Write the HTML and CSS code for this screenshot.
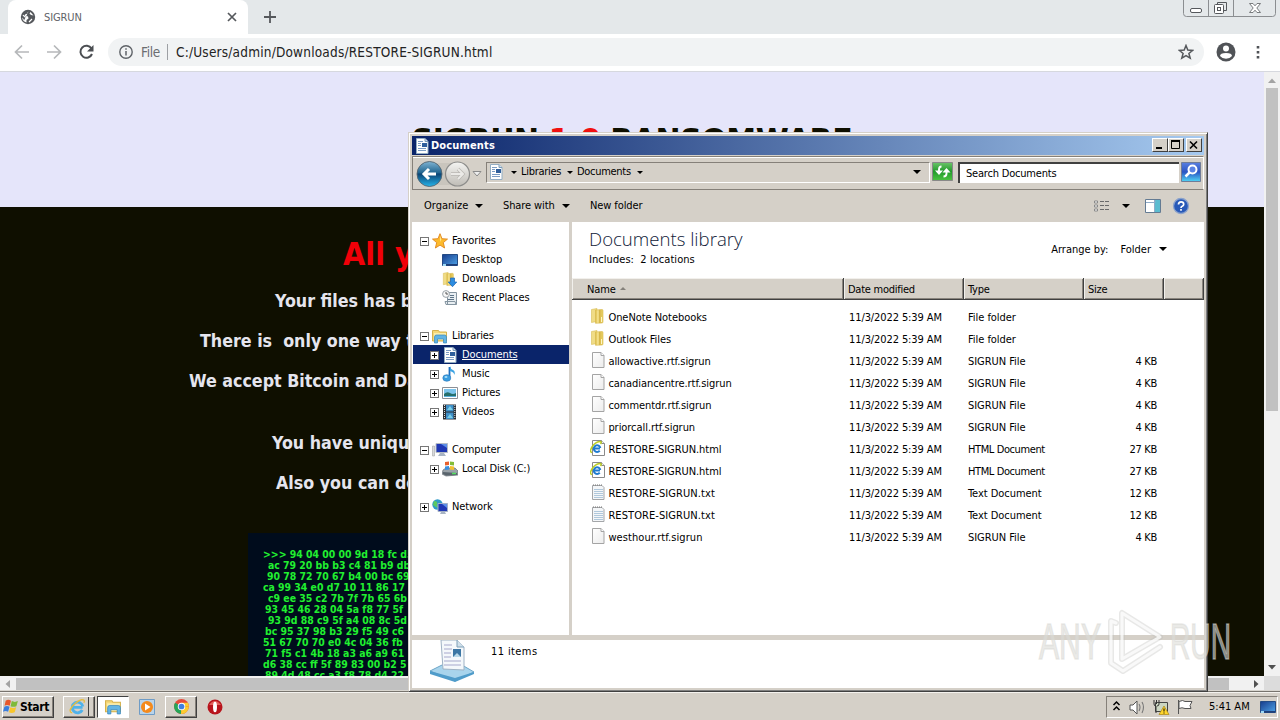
FILE: index.html
```html
<!DOCTYPE html>
<html lang="en">
<head>
<meta charset="utf-8">
<title>SIGRUN</title>
<link rel="stylesheet" href="styles.css">
</head>
<body>
<svg class="defs" width="0" height="0">
  <defs>
    <linearGradient id="gFold" x1="0" x2="1"><stop offset="0" stop-color="#d9b740"/><stop offset=".35" stop-color="#fbeb9c"/><stop offset=".5" stop-color="#d6b548"/><stop offset="1" stop-color="#ecd468"/></linearGradient>
    <linearGradient id="gBlue" x1="0" y1="0" x2="1" y2="1"><stop offset="0" stop-color="#173c8c"/><stop offset="1" stop-color="#4fa4e8"/></linearGradient>
    <linearGradient id="gPage" x1="0" y1="0" x2="1" y2="1"><stop offset="0" stop-color="#fff"/><stop offset="1" stop-color="#ececec"/></linearGradient>
    <linearGradient id="gBack" x1="0" y1="0" x2="0" y2="1"><stop offset="0" stop-color="#7fb4d4"/><stop offset=".45" stop-color="#22658f"/><stop offset=".5" stop-color="#0c4474"/><stop offset="1" stop-color="#25b4ea"/></linearGradient>
    <linearGradient id="gFwd" x1="0" y1="0" x2="0" y2="1"><stop offset="0" stop-color="#f4f4f2"/><stop offset="1" stop-color="#bfbcb6"/></linearGradient>
    <linearGradient id="gSearch" x1="0" y1="0" x2="0" y2="1"><stop offset="0" stop-color="#5a7fe0"/><stop offset=".5" stop-color="#2a55c4"/><stop offset="1" stop-color="#4fd4f4"/></linearGradient>
    <linearGradient id="gGreen" x1="0" y1="0" x2="0" y2="1"><stop offset="0" stop-color="#6cc46a"/><stop offset=".5" stop-color="#229a2a"/><stop offset="1" stop-color="#4cc440"/></linearGradient>
  </defs>
  <symbol id="folder" viewBox="0 0 16 16"><path d="M1.500 1.500 7 .5v13l-5.500 1z" fill="#f0dc86" stroke="#d8bd55" stroke-width=".6"/><path d="M5.500 2 12 1.500q1 0 1 1V14q0 1-1 1l-6.500 .3z" fill="url(#gFold)" stroke="#d6b94c" stroke-width=".6"/><path d="M11.500 9v5" stroke="#fff6c4"/></symbol>
  <symbol id="page" viewBox="0 0 16 16"><path d="M2.500 .5h8.500l3 3v12H2.500z" fill="url(#gPage)" stroke="#a4a4a4"/><path d="M11 .5v3h3" fill="#fff" stroke="#a4a4a4"/></symbol>
  <symbol id="text" viewBox="0 0 16 16"><path d="M2.500 1.500H12l2 2v12H2.500z" fill="#f4f6f8" stroke="#a4a6a9"/><path d="M3 1h9" stroke="#777" stroke-dasharray="1 1"/><path d="M4 5.500h9M4 7.500h9M4 9.500h9M4 11.500h9M4 13.500h9" stroke="#b0c8dc"/></symbol>
  <symbol id="iepage" viewBox="0 0 16 16"><path d="M2.500 .5h9l3 3v12H2.500z" fill="#fff" stroke="#8a8a8a"/><path d="M11.500 .5v3h3" fill="#eee" stroke="#8a8a8a"/><path d="M10 8.500H4.200M9.700 10.600A3.300 3.300 0 1 1 10.300 8" fill="none" stroke="#1f7bd0" stroke-width="2"/><path d="M2 12.500Q-1 12 2 7t8-5.500q2 0 .5 2.500" fill="none" stroke="#bccd24" stroke-width="1.500"/></symbol>
  <symbol id="rich" viewBox="0 0 16 16"><path d="M2.500 .5H11l3 3v12H2.500z" fill="#fff" stroke="#94aec4"/><path d="M11 .5v3h3" fill="#cde" stroke="#7c9cb8"/><path d="M4 3.500h5M4 5.500h3M4 7.500h3M4 10.500h8M4 12.500h8" stroke="#7b9cc4"/><path d="M8 5h5v4H8z" fill="#2f5f9c"/></symbol>
  <symbol id="star" viewBox="0 0 16 16"><path d="m8 .7 2 5 5.500.4-4.200 3.500 1.300 5.400L8 12.100 3.400 15l1.300-5.400L.5 6.100 6 5.700z" fill="#fdbb2c" stroke="#e0851c" stroke-width=".9"/><path d="m8 2.500 1.200 4L8 9z" fill="#ffe894"/></symbol>
  <symbol id="desk" viewBox="0 0 16 16"><path d="M.5 2.500h15v11H.5z" fill="url(#gBlue)" stroke="#244b84"/><path d="M1 12h14v1.500H1z" fill="#1e3f78"/><path d="M1 12h3v2H1z" fill="#9cd8f4"/></symbol>
  <symbol id="down" viewBox="0 0 16 16"><use href="#folder" width="14" height="16"/><path d="M8.500 7h4v4h2.300l-4.300 4.700L6.200 11h2.300z" fill="#2c8ce0" stroke="#1d65b4" stroke-width=".7"/></symbol>
  <symbol id="recent" viewBox="0 0 16 16"><path d="M5.500 2.500h9v12h-9zM3 11.500h10l1 3H4z" fill="#e8eef2" stroke="#8494a0"/><path d="M8 5.500h4M8 7.500h4M6 9.500h6" stroke="#5d7488"/><circle cx="4" cy="4" r="3.400" fill="#f8f8f8" stroke="#9aa2a8"/><path d="M4 2v2h2" fill="none" stroke="#555"/></symbol>
  <symbol id="lib" viewBox="0 0 16 16"><path d="M.5 2.500h6l1 1.500h7v9H.5z" fill="#f5d878" stroke="#d5b14c"/><path d="M2 5h12v7H2z" fill="#fbeeae"/><path d="M2.500 9q0-2 2-2h8q2 0 2 2v6h-3v-4h-6v4h-3z" fill="#62b4e4" stroke="#3686bd" stroke-width=".7"/></symbol>
  <symbol id="music" viewBox="0 0 16 16"><path d="M7.500 1v10" stroke="#1e70bf" stroke-width="1.800"/><path d="M8 0q.5 3 3 4t1.500 5Q12 6 8 5z" fill="#3ca4e4"/><ellipse cx="4.800" cy="12" rx="4" ry="3.300" fill="#3a9de0" stroke="#2676b8" stroke-width=".6"/><ellipse cx="4" cy="11" rx="1.500" ry="1" fill="#a8e0fa"/></symbol>
  <symbol id="pic" viewBox="0 0 16 16"><path d="M.5 2.500h15v11H.5z" fill="#fff" stroke="#8b8f96"/><path d="M2 4h12v8H2z" fill="#7cc4ec"/><path d="M2 9q3-3 6-1t6 0v4H2z" fill="#266f6c"/><path d="M2 11h12v1H2z" fill="#5ab0dc"/></symbol>
  <symbol id="video" viewBox="0 0 16 16"><path d="M1 .5h13v15H1z" fill="#2b2f34"/><path d="M4 1h7.500v6.500H4zM4 8.500h7.500V15H4z" fill="#3f8fc8"/><path d="m5 6 3-4 3 4zm0 8 3-4 3 4z" fill="#79cfe8"/><path d="M2.500 1v14M12.800 1v14" stroke="#d8dde2" stroke-dasharray="1 1"/></symbol>
  <symbol id="comp" viewBox="0 0 16 16"><path d="M.5 4h2v10h-2z" fill="#d8dadc" stroke="#999" stroke-width=".5"/><path d="M4 1.500h11.500v9H4z" fill="#2038b4" stroke="#b6bcc4"/><path d="m9 2 6 0v4z" fill="#5d8ee8"/><path d="M8 11h4l2 3H6z" fill="#a8b4c4"/></symbol>
  <symbol id="disk" viewBox="0 0 16 16"><path d="m1 9 3-2h9l3 3v4l-12 1-4-2z" fill="#9aa2a8" stroke="#666f76" stroke-width=".7"/><path d="m1 11 14 1v2L4 14.500 1 13z" fill="#59646c"/><path d="M10 12.500h4" stroke="#52e060" stroke-width="1.500"/><path d="m3 1 4-.5V4L3 4.500z" fill="#e8602c"/><path d="m8 .5 4 .5v3.500L8 4z" fill="#83bc38"/><path d="m3 5.500 4-.5v3.500L3 9z" fill="#3a8ede"/><path d="M8 5l4 .5V9l-4-.5z" fill="#f4c030"/></symbol>
  <symbol id="net" viewBox="0 0 16 16"><circle cx="5.500" cy="5.500" r="5.200" fill="#2f9ac8"/><path d="M2 2q4 0 3 3t3 4Q4 9 1 6z" fill="#5cc860"/><path d="M6 4.500h9.500v8H6z" fill="#2038b4" stroke="#a4b0c4"/><path d="m10 5 5 0v4z" fill="#5d8ee8"/><path d="M9 13h4l1 2H8z" fill="#a8b4c4"/></symbol>
  <symbol id="flag4" viewBox="0 0 16 16"><path d="M2.500 2.500q2.500-1.500 5 0L6.300 7.300q-2.500-1.300-4.800 0z" fill="#e8582c"/><path d="M8.300 2.900q2.700 1.500 5.700 0l-1.400 4.800q-3 1.300-5.500 0z" fill="#7fba38"/><path d="M1.300 8.200q2.500-1.200 4.800 0L4.800 13q-2.500-1.400-4.800 0z" fill="#3a7ede"/><path d="M6.900 8.600q2.600 1.400 5.500 0L11 13.400q-2.800 1.400-5.400 0z" fill="#f8c62c"/></symbol>
</svg>

<main class="screen">
  <section class="browser">
    <header class="tabs">
      <div class="tab">
        <svg class="globe" viewBox="0 0 16 16"><circle cx="8" cy="8" r="7.200" fill="#55585c"/><path d="M8.500 2.500q-1.500 1-1 2L5 5.500 4.500 7l3.500.5.500 2-2 1.500v2.500q-4-1-4.300-5L3.500 10 4 11.500M10.500 3l-1 1.500L11 6l2.500.5" fill="#fff"/><path d="M3 6q2 3 5 2M9 13l3-3" fill="none" stroke="#fff" stroke-width="1.200"/></svg>
        <span class="tab-title">SIGRUN</span>
        <svg class="tab-x" viewBox="0 0 10 10"><path d="m1 1 8 8M9 1 1 9" stroke="#55585c" stroke-width="1.700"/></svg>
      </div>
      <svg class="plus" viewBox="0 0 12 12"><path d="M6 0v12M0 6h12" stroke="#55585c" stroke-width="1.800"/></svg>
      <svg class="winbtns" viewBox="0 0 94 18"><path d="M.5 0v13.500q0 3 3 3h86q3 0 3-3V0M25.500 0v16.500M50.500 0v16.500" fill="none" stroke="#8b8e91"/><rect x="7.500" y="8.500" width="11" height="4" rx="1.500" fill="#fff" stroke="#55585c"/><path d="M34.500 5.500v-3h9v8h-3" fill="none" stroke="#55585c"/><rect x="31.500" y="4.500" width="9" height="9" rx="1" fill="#fff" stroke="#55585c"/><rect x="34.500" y="7.500" width="3" height="3" fill="none" stroke="#55585c"/><path d="m66.500 3.500h3.500l2 2.300 2-2.300h3.500L73.800 8l3.700 4.500H74l-2-2.300-2 2.300h-3.500L70.200 8z" fill="#fff" stroke="#6b6e71" stroke-width=".9"/></svg>
    </header>
    <div class="toolbar">
      <svg class="navs" viewBox="0 0 84 20"><g fill="none" stroke="#b6b8ba" stroke-width="1.700"><path d="M16 10H3M9 3.500 2.500 10 9 16.500M34 10h13M41 3.500 47.500 10 41 16.500"/></g><path d="M78.500 6.500A6 6 0 1 0 79 12" fill="none" stroke="#4b4e52" stroke-width="2"/><path d="M80.500 3v6.500H74z" fill="#4b4e52"/></svg>
      <div class="omni">
        <svg class="info" viewBox="0 0 14 14"><circle cx="7" cy="7" r="6.200" fill="none" stroke="#5f6368" stroke-width="1.400"/><path d="M7 6v4.500M7 3.300v1.500" stroke="#5f6368" stroke-width="1.500"/></svg>
        <span class="scheme">File</span><i class="bar"></i>
        <span class="url">C:/Users/admin/Downloads/RESTORE-SIGRUN.html</span>
        <svg class="fav" viewBox="0 0 16 16"><path d="m8 1.500 1.800 4.600 4.900.3-3.800 3.100 1.300 4.700L8 11.600l-4.200 2.600 1.300-4.700-3.800-3.100 4.900-.3z" fill="none" stroke="#55585c" stroke-width="1.500"/></svg>
      </div>
      <svg class="user" viewBox="0 0 20 20"><circle cx="10" cy="10" r="9.500" fill="#505357"/><circle cx="10" cy="6.500" r="3" fill="#fff"/><path d="M4 14q0-3 6-3t6 3q-2.300 2.800-6 2.800T4 14z" fill="#fff"/></svg>
      <svg class="dots" viewBox="0 0 4 14"><path d="M.7 1h2.600v2.600H.7zM.7 6h2.600v2.600H.7zM.7 11h2.600v2.600H.7z" fill="#505357"/></svg>
    </div>
    <div class="view">
      <div class="page">
        <div class="hero"><h1>SIGRUN <b>1.0</b> RANSOMWARE</h1></div>
        <div class="note">
          <h2>All your files</h2>
          <p class="p1">Your files has been</p>
          <p class="p2">There is&nbsp; only one way to</p>
          <p class="p3">We accept Bitcoin and Dash</p>
          <p class="p4">You have unique</p>
          <p class="p5">Also you can decrypt</p>
          <pre class="hex">&gt;&gt;&gt; 94 04 00 00 9d 18 fc d5
<i class="s1"></i>ac 79 20 bb b3 c4 81 b9 db
<i class="s2"></i>90 78 72 70 67 b4 00 bc 69
ca 99 34 e0 d7 10 11 86 17
<i class="s1"></i>c9 ee 35 c2 7b 7f 7b 65 6b
<i class="s3"></i>93 45 46 28 04 5a f8 77 5f
<i class="s1"></i>93 9d 88 c9 5f a4 08 8c 5d
<i class="s3"></i>bc 95 37 98 b3 29 f5 49 c6
51 67 70 70 e0 4c 04 36 fb
<i class="s3"></i>71 f5 c1 4b 18 a3 a6 a9 61
d6 38 cc ff 5f 89 83 00 b2 5
<i class="s3"></i>89 4d 48 cc a3 f8 78 d4 22</pre>
        </div>
      </div>
      <div class="vscroll"><svg viewBox="0 0 16 16"><path d="m4 11 4-4.500 4 4.500z" fill="#a3a3a3"/></svg><i></i><svg class="vdown" viewBox="0 0 16 16"><path d="m4 5 4 4.500L12 5z" fill="#505050"/></svg></div>
    </div>
    <div class="hscroll"><svg viewBox="0 0 16 16"><path d="m10 4-4.500 4L10 12z" fill="#a3a3a3"/></svg><i></i><svg class="hright" viewBox="0 0 16 16"><path d="m6 4 4.500 4L6 12z" fill="#505050"/></svg><b></b></div>
  </section>

  <section class="explorer">
    <div class="titlebar"><svg viewBox="0 0 16 16"><use href="#rich"/></svg><span>Documents</span>
      <div class="ctl"><i><svg viewBox="0 0 12 10"><path d="M2 8h6" stroke="#000" stroke-width="2"/></svg></i><i><svg viewBox="0 0 12 10"><path d="M1.500 1.500h8v7h-8zM1 1.500h9" fill="none" stroke="#000"/><path d="M1 1h9" stroke="#000" stroke-width="2"/></svg></i><i class="cx"><svg viewBox="0 0 12 10"><path d="m2 1.500 7 7M9 1.500l-7 7" stroke="#000" stroke-width="1.600"/></svg></i></div>
    </div>
    <div class="addr">
      <svg class="bf" viewBox="0 0 70 28"><path d="M15 3h28v22H15z" fill="#c9c5bd"/><circle cx="16.500" cy="14" r="12.500" fill="url(#gBack)" stroke="#54636e" stroke-width=".9"/><path d="M23 14H12M16 9l-5 5 5 5" fill="none" stroke="#fff" stroke-width="3"/><circle cx="44.500" cy="14" r="12" fill="url(#gFwd)" stroke="#8d8d8b" stroke-width="1.200"/><path d="M38 14h11M45 9l5 5-5 5" fill="none" stroke="#b9b7b3" stroke-width="3.400"/><path d="M38 14h11M45 9l5 5-5 5" fill="none" stroke="#ebeae7" stroke-width="2"/><path d="M60 11.500h8L64 16z" fill="#eee" stroke="#8b8b8b"/></svg>
      <div class="crumbs"><svg class="ic" viewBox="0 0 16 16"><use href="#rich"/></svg><i class="tri"></i><span>Libraries</span><i class="tri"></i><span>Documents</span><i class="tri"></i><i class="tri drop"></i></div>
      <svg class="refresh" viewBox="0 0 22 20"><path d="M.5.500h20v18H.5z" fill="url(#gGreen)" stroke="#888"/><path d="M9.500 4.500q-2.500 0-2.500 3V9M11.500 14.500q3 0 3-3V10" fill="none" stroke="#fff" stroke-width="1.900"/><path d="M3 8.500h8l-4 4.500zM10.500 10.500h8l-4-4.500z" fill="#fff"/></svg>
      <div class="search">Search Documents</div>
      <svg class="go" viewBox="0 0 20 20"><path d="M.5.500h19v19H.5z" fill="url(#gSearch)" stroke="#6f7c98"/><circle cx="11.500" cy="7.500" r="4" fill="#5b83e4" stroke="#fff" stroke-width="2"/><path d="m8.500 10.500-4 4" stroke="#fff" stroke-width="2.500"/></svg>
    </div>
    <div class="cmds"><span class="c1">Organize</span><i class="tri big"></i><span class="c2">Share with</span><i class="tri big"></i><span class="c3">New folder</span>
      <svg class="views" viewBox="0 0 100 18"><path d="M1.500 4h3v2h-3zM1.500 8h3v2h-3zM1.500 12h3v2h-3z" fill="#fff" stroke="#898989"/><path d="M7 4.500h9M7 8.500h9M7 12.500h9" stroke="#6a6a6a" stroke-dasharray="4 1"/><path d="M29 7h8l-4 4z" fill="#000"/><path d="M52.500 2.500h15v13h-15z" fill="#fff" stroke="#647b93"/><path d="M62 3h5v12h-5z" fill="#5bbcd0"/><path d="M53 5.500h9v-2M61.500 3v12" fill="none" stroke="#90acc8"/><circle cx="88" cy="9" r="7.500" fill="#2859b8" stroke="#8ba2cc" stroke-width="1.300"/><path d="M85.500 7.500q0-2.700 2.600-2.700t2.600 2.400q0 1.500-1.500 2.100-1.200.5-1.200 1.700M88 12v1.800" fill="none" stroke="#fff" stroke-width="1.700"/></svg>
    </div>
    <div class="body">
      <nav class="tree">
        <div class="r"><i class="pm minus"></i><svg viewBox="0 0 16 16"><use href="#star"/></svg><span>Favorites</span></div>
        <div class="r sub"><i class="pm none"></i><svg viewBox="0 0 16 16"><use href="#desk"/></svg><span>Desktop</span></div>
        <div class="r sub"><i class="pm none"></i><svg viewBox="0 0 16 16"><use href="#down"/></svg><span>Downloads</span></div>
        <div class="r sub"><i class="pm none"></i><svg viewBox="0 0 16 16"><use href="#recent"/></svg><span>Recent Places</span></div>
        <div class="r"></div>
        <div class="r"><i class="pm minus"></i><svg viewBox="0 0 16 16"><use href="#lib"/></svg><span>Libraries</span></div>
        <div class="r sub sel"><i class="pm"></i><svg viewBox="0 0 16 16"><use href="#rich"/></svg><span>Documents</span></div>
        <div class="r sub"><i class="pm"></i><svg viewBox="0 0 16 16"><use href="#music"/></svg><span>Music</span></div>
        <div class="r sub"><i class="pm"></i><svg viewBox="0 0 16 16"><use href="#pic"/></svg><span>Pictures</span></div>
        <div class="r sub"><i class="pm"></i><svg viewBox="0 0 16 16"><use href="#video"/></svg><span>Videos</span></div>
        <div class="r"></div>
        <div class="r"><i class="pm minus"></i><svg viewBox="0 0 16 16"><use href="#comp"/></svg><span>Computer</span></div>
        <div class="r sub"><i class="pm"></i><svg viewBox="0 0 16 16"><use href="#disk"/></svg><span class="ld">Local Disk (C:)</span></div>
        <div class="r"></div>
        <div class="r"><i class="pm"></i><svg viewBox="0 0 16 16"><use href="#net"/></svg><span>Network</span></div>
      </nav>
      <div class="files">
        <div class="libhead"><div><div class="libname">Documents library</div><div class="inc">Includes:&nbsp; 2 locations</div></div><div class="arr"><span>Arrange by:</span><span class="fo">Folder</span><i class="tri big"></i></div></div>
        <div class="cols"><span class="nm">Name <i></i></span><span>Date modified</span><span>Type</span><span>Size</span><span></span></div>
        <div class="rows">
          <div class="f"><svg viewBox="0 0 16 16"><use href="#folder"/></svg><span>OneNote Notebooks</span><span class="d">11/3/2022 5:39 AM</span><span>File folder</span><span></span></div>
          <div class="f"><svg viewBox="0 0 16 16"><use href="#folder"/></svg><span>Outlook Files</span><span class="d">11/3/2022 5:39 AM</span><span>File folder</span><span></span></div>
          <div class="f"><svg viewBox="0 0 16 16"><use href="#page"/></svg><span>allowactive.rtf.sigrun</span><span class="d">11/3/2022 5:39 AM</span><span>SIGRUN File</span><span>4 KB</span></div>
          <div class="f"><svg viewBox="0 0 16 16"><use href="#page"/></svg><span>canadiancentre.rtf.sigrun</span><span class="d">11/3/2022 5:39 AM</span><span>SIGRUN File</span><span>4 KB</span></div>
          <div class="f"><svg viewBox="0 0 16 16"><use href="#page"/></svg><span>commentdr.rtf.sigrun</span><span class="d">11/3/2022 5:39 AM</span><span>SIGRUN File</span><span>4 KB</span></div>
          <div class="f"><svg viewBox="0 0 16 16"><use href="#page"/></svg><span>priorcall.rtf.sigrun</span><span class="d">11/3/2022 5:39 AM</span><span>SIGRUN File</span><span>4 KB</span></div>
          <div class="f"><svg viewBox="0 0 16 16"><use href="#iepage"/></svg><span>RESTORE-SIGRUN.html</span><span class="d">11/3/2022 5:39 AM</span><span class="doc">HTML Document</span><span>27 KB</span></div>
          <div class="f"><svg viewBox="0 0 16 16"><use href="#iepage"/></svg><span>RESTORE-SIGRUN.html</span><span class="d">11/3/2022 5:39 AM</span><span class="doc">HTML Document</span><span>27 KB</span></div>
          <div class="f"><svg viewBox="0 0 16 16"><use href="#text"/></svg><span class="txt">RESTORE-SIGRUN.txt</span><span class="d">11/3/2022 5:39 AM</span><span>Text Document</span><span>12 KB</span></div>
          <div class="f"><svg viewBox="0 0 16 16"><use href="#text"/></svg><span class="txt">RESTORE-SIGRUN.txt</span><span class="d">11/3/2022 5:39 AM</span><span>Text Document</span><span>12 KB</span></div>
          <div class="f"><svg viewBox="0 0 16 16"><use href="#page"/></svg><span class="txt">westhour.rtf.sigrun</span><span class="d">11/3/2022 5:39 AM</span><span>SIGRUN File</span><span>4 KB</span></div>
        </div>
      </div>
    </div>
    <div class="details">
      <svg class="biglib" viewBox="0 0 46 44"><path d="m1 31 12-6h20l12 7-19 9z" fill="#a8d4ec" stroke="#6da6c8"/><path d="m1 31 25 7 19-6v2L26 42 1 34z" fill="#4f9cca"/><path d="M12 0h16l7 7v23l-21-1z" fill="#f4f8fb" stroke="#9fb2c4"/><path d="M28 0v7h7" fill="#cfdfea" stroke="#7fa0b8"/><path d="M15 5h8M15 9h8M15 13h7M15 17h7M15 21h17M15 25h17" stroke="#a6a8cc"/><path d="M24 9h8v8h-8z" fill="#3c76a4"/><path d="m24 17 4-4 4 4z" fill="#b8d8e8"/></svg>
      <span>11 items</span>
    </div>
  </section>

  <footer class="taskbar">
    <div class="start"><svg viewBox="0 0 15 15"><use href="#flag4"/></svg><b>Start</b></div>
    <div class="tb ie"><svg viewBox="0 0 16 16"><path d="M12.800 8.800H4M12.500 11.300A5 5 0 1 1 13 8" fill="none" stroke="#4fb2ea" stroke-width="2.700"/><path d="M3 14Q-1 13 3 8t9-6.500q3.500 0 2 3" fill="none" stroke="#e8bd3c" stroke-width="1.200"/></svg></div>
    <div class="tb act"><svg viewBox="0 0 16 16"><use href="#lib"/></svg></div>
    <div class="quick"><svg viewBox="0 0 16 16"><path d="M.5.500h15v15H.5z" fill="#b9d4ea" stroke="#6f9cc6"/><circle cx="8" cy="8" r="6" fill="#f48a1c"/><path d="m6 4.500 5.500 3.500L6 11.500z" fill="#fff"/></svg></div>
    <div class="tb chrome"><svg viewBox="0 0 16 16"><circle cx="8" cy="8" r="7" fill="#e64a3b"/><path d="M8 8 2 4.400A7 7 0 0 0 7.500 15z" fill="#26a658"/><path d="M8 8h7A7 7 0 0 1 7.500 15z" fill="#fccc2f"/><path d="M8 4.500h6A7 7 0 0 1 15 8h-5z" fill="#fccc2f"/><circle cx="8" cy="8" r="3.500" fill="#fff"/><circle cx="8" cy="8" r="2.700" fill="#3f7fe0"/></svg></div>
    <div class="opera"><svg viewBox="0 0 16 16"><circle cx="8" cy="8" r="7.500" fill="#b8141c"/><path d="M2 6q6-8 12 0" fill="#e2605c"/><ellipse cx="8" cy="8" rx="2" ry="5.300" fill="#fff"/></svg></div>
    <div class="tray">
      <svg viewBox="0 0 90 18"><path d="m6.500 7 3-3 3 3M6.500 12l3-3 3 3" fill="none" stroke="#000" stroke-width="1.500"/><path d="M23 7h3l4-4v13l-4-4h-3z" fill="#fff" stroke="#555"/><path d="M32 6q2 3 0 7M35 4q3 5 0 11" fill="none" stroke="#777" stroke-width="1.100"/><path d="M48.500 4.500h12v9h-12z" fill="#ccd6c2" stroke="#444"/><path d="M47 2v4q0 2 2 2v7M52 2v4q0 2-2 2M49.500 2v4" fill="none" stroke="#333"/><path d="m57 8 5 8.500H52z" fill="#ffd52c" stroke="#a98412" stroke-width=".7"/><path d="M57 10.500v3M57 14.500v1" stroke="#000"/><path d="M71.500 2v14M72 3.500q4-2 6 0h7l-2 4 1 3h-6q-3-1.500-6 0z" fill="#fff" stroke="#555"/></svg>
      <span>5:41 AM</span>
      <svg class="td" viewBox="0 0 16 16"><use href="#desk"/></svg>
    </div>
  </footer>

  <svg class="mark" viewBox="0 0 200 70">
    <g fill="#dcdcd8" fill-opacity=".6" stroke="#d8d8d4" stroke-opacity=".5" stroke-width="1.600" font-family="Liberation Sans" font-size="50"><text x="3" y="54" textLength="62" lengthAdjust="spacingAndGlyphs">ANY</text><text x="134" y="54" textLength="61" lengthAdjust="spacingAndGlyphs">RUN</text></g>
    <g fill="none" stroke-linejoin="round" stroke-linecap="round"><path d="M86 8v46l38-22zM80 18l-5-2v42l12 8 37-24" stroke="#bdbdba" stroke-opacity=".35" stroke-width="6"/><path d="M86 8v46l38-22zM80 18l-5-2v42l12 8 37-24" stroke="#fff" stroke-opacity=".75" stroke-width="3"/></g>
  </svg>
</main>
</body>
</html>
```
FILE: styles.css
```css
* { box-sizing: border-box; }
body { margin: 0; font: 11px/14px "DejaVu Sans Condensed", "DejaVu Sans", sans-serif; font-stretch: condensed; color: #000; }
.defs { position: absolute; }
svg { display: block; flex: none; }
i { font-style: normal; }
.screen { position: relative; width: 1280px; height: 720px; overflow: hidden; display: flex; flex-direction: column; }
.browser { height: 692px; display: flex; flex-direction: column; background: #fff; }

.tabs { height: 34px; background: #e4e8ea; display: flex; padding-left: 8px; }
.tab { width: 240px; background: #fff; border-radius: 8px 8px 0 0; display: flex; align-items: center; padding: 0 11px 0 12px; }
.globe { width: 16px; height: 16px; }
.tab-title { flex: 1; margin: 1px 0 0 8px; color: #5f6368; letter-spacing: -.1px; }
.tab-x { width: 10px; height: 10px; }
.plus { width: 12px; height: 12px; margin: 11px 0 0 16px; }
.winbtns { width: 94px; height: 18px; margin-left: auto; margin-right: 3px; }
.toolbar { height: 38px; display: flex; align-items: center; border-bottom: 1px solid #d6d8de; padding-bottom: 1px; }
.navs { width: 84px; height: 20px; margin-left: 13px; }
.omni { margin-left: 11px; width: 1096px; height: 28px; border-radius: 14px; background: #f1f3f4; display: flex; align-items: center; padding: 0 10px 0 11px; font-size: 13.500px; color: #222; }
.info { width: 14px; height: 14px; }
.scheme { margin-left: 8px; width: 22px; color: #6a6d71; letter-spacing: -.3px; }
.bar { width: 1px; height: 16px; background: #9da0a4; margin: 0 8px 0 4px; }
.url { flex: 1; white-space: nowrap; letter-spacing: .2px; }
.fav { width: 16px; height: 16px; }
.user { width: 20px; height: 20px; margin-left: 12px; }
.dots { width: 4px; height: 14px; margin-left: 20px; }

.view { height: 604px; display: flex; }
.page { width: 1264px; overflow: hidden; background: #0f0f00; }
.hero { height: 135px; background: #e5e5fa; padding-top: 46px; }
.hero h1 { margin: 0; text-align: center; font: bold 30px/44px "DejaVu Sans", sans-serif; color: #0f0f00; letter-spacing: -.5px; }
.hero b { color: #f01010; }
.note { color: #e5e5ee; font-weight: bold; white-space: nowrap; }
.note h2 { margin: 26px 0 0 343px; font: bold 32px/42px "DejaVu Sans Condensed", "DejaVu Sans", sans-serif; color: #f00008; }
.note p { margin: 0; font-size: 17.700px; line-height: 24px; }
.note .p1 { margin: 14px 0 0 275px; }
.note .p2 { margin: 16px 0 0 200px; }
.note .p3 { margin: 16px 0 0 189px; }
.note .p4 { margin: 38px 0 0 272px; }
.note .p5 { margin: 16px 0 0 276px; }
.hex { margin: 38px 0 0 248px; width: 768px; height: 143px; padding: 16px 0 0 15px; background: #000c1c; color: #20f030; font: bold 10.400px/11px "DejaVu Sans Condensed", "DejaVu Sans", sans-serif; overflow: hidden; }
.s1, .s2, .s3 { display: inline-block; width: 5px; }
.s2 { width: 4px; }
.s3 { width: 2px; }
.vscroll { width: 16px; background: #f1f1f1; display: flex; flex-direction: column; }
.vscroll svg { width: 16px; height: 16px; }
.vscroll i { margin: 0 2px; height: 323px; background: #c1c1c1; }
.vscroll .vdown { margin-top: auto; }
.hscroll { height: 16px; background: #f1f1f1; display: flex; border-bottom: 2px solid #d9d6d0; }
.hscroll svg { width: 16px; height: 16px; }
.hscroll i { width: 1213px; height: 12px; margin-top: 2px; background: #c1c1c1; }
.hscroll .hright { margin-left: auto; }
.hscroll b { width: 16px; background: #dcdcdc; }

.explorer { position: absolute; z-index: 2; left: 408px; top: 132px; width: 800px; height: 560px; background: #d5d0c8; border: 1px solid; border-color: #d5d0c8 #404040 #404040 #d5d0c8; box-shadow: inset 1px 1px #fff, inset -1px -1px #808080; padding: 3px; display: flex; flex-direction: column; }
.titlebar { height: 19px; background: linear-gradient(90deg, #0a246a, #a6caf0); color: #fff; font-weight: bold; display: flex; align-items: center; padding-left: 2px; }
.titlebar svg { width: 16px; height: 16px; }
.titlebar span { margin-left: 1px; letter-spacing: .15px; }
.ctl { display: flex; margin: -1px 2px 0 auto; }
.ctl i { width: 16px; height: 14px; background: #d5d0c8; border: 1px solid; border-color: #fff #404040 #404040 #fff; }
.ctl .cx { margin-left: 2px; }
.ctl svg { width: 12px; height: 10px; margin: 1px; }
.addr { height: 34px; margin-top: 1px; border: 1px solid; border-color: #858079 #fff #858079 #858079; box-shadow: inset 0 1px #fff; display: flex; align-items: center; padding-bottom: 2px; }
.bf { width: 70px; height: 28px; margin-top: 3px; }
.crumbs { width: 444px; height: 21px; margin-left: 3px; border: 1px solid; border-color: #858079 #fff #fff #858079; display: flex; align-items: center; }
.crumbs .ic { width: 16px; height: 16px; margin-left: 1px; }
.crumbs span { margin-left: 4px; letter-spacing: -.3px; }
.crumbs .tri { margin-left: 6px; }
.crumbs .ic + .tri { margin-left: 7px; }
.tri { border: 3px solid transparent; border-top-color: #000; border-bottom: 0; }
.tri.big { border-width: 4px 4px 0; }
.crumbs .drop { margin-left: auto; margin-right: 8px; border-width: 4px 4px 0; }
.refresh { width: 22px; height: 20px; margin-left: 2px; }
.search { width: 221px; height: 21px; margin-left: 4px; background: #fff; border: 1px solid #404040; border-width: 2px 0 0 2px; padding: 3px 0 0 6px; letter-spacing: -.2px; }
.go { width: 20px; height: 20px; margin-left: 2px; }
.cmds { height: 32px; display: flex; align-items: center; padding: 0 0 1px 12px; }
.cmds span { white-space: nowrap; }
.c1 { width: 51px; }
.c2 { width: 59px; margin-left: 20px; letter-spacing: -.1px; }
.c3 { margin-left: 20px; letter-spacing: -.1px; }
.views { width: 100px; height: 18px; margin-left: auto; margin-right: 11px; }
.body { height: 413px; display: flex; background: #fff; }
.tree { width: 160px; padding-top: 9px; border-right: 3px solid #d5d0c8; }
.r { height: 19px; display: flex; align-items: center; padding-left: 7px; margin: 0 0 0 1px; }
.r.sub { padding-left: 17px; }
.r svg { width: 16px; height: 16px; margin-left: 3px; }
.r span { margin: 1px 0 0 4px; letter-spacing: -.1px; }
.r .ld { letter-spacing: -.2px; }
.sel { background: #0a246a; color: #fff; text-decoration: underline; }
.pm { width: 9px; height: 9px; margin-top: 1px; border: 1px solid #777; background: linear-gradient(#000, #000) center/5px 1px no-repeat, linear-gradient(#000, #000) center/1px 5px no-repeat, #fff; }
.pm.minus { background: linear-gradient(#000, #000) center/5px 1px no-repeat, #fff; }
.pm.none { visibility: hidden; }
.files { flex: 1; display: flex; flex-direction: column; }
.libhead { height: 56px; display: flex; justify-content: space-between; padding: 5px 37px 0 17px; }
.libname { font: 300 18.600px/23px "Open Sans", "Noto Sans", sans-serif; font-stretch: normal; color: #102038; }
.inc { margin-top: 3px; letter-spacing: .05px; }
.arr { display: flex; align-items: center; height: 46px; }
.fo { margin-left: 12px; }
.arr .tri { margin: -2px 0 0 8px; }
.cols { height: 22px; display: grid; grid-template-columns: 272px 120px 120px 80px 40px; background: #d5d0c8; }
.cols span { border-right: 1px solid #404040; border-bottom: 1px solid #404040; box-shadow: inset 1px 1px #f2f0ec, inset -1px -1px #8a857e; padding: 5px 0 0 4px; letter-spacing: -.25px; }
.cols .nm { padding-left: 15px; letter-spacing: -.1px; }
.nm i { display: inline-block; border: 3px solid transparent; border-bottom-color: #85817b; border-top: 0; margin: 0 0 3px 1px; }
.rows { padding-top: 6px; }
.f { height: 22px; display: grid; grid-template-columns: 36px 240px 120px 115px 74px; align-items: center; white-space: nowrap; letter-spacing: -.05px; }
.f svg { width: 16px; height: 16px; margin: -2px 0 0 18px; }
.f span { padding-top: 2px; }
.f .d { padding-left: 1px; letter-spacing: -.1px; }
.f .doc { letter-spacing: -.4px; }
.f .txt { letter-spacing: .08px; }
.f > :last-child { text-align: right; letter-spacing: -.3px; }
.f > :nth-child(2) { padding-left: .4px; }
.details { flex: 1; border-top: 5px solid #d5d0c8; background: #fff; display: flex; }
.biglib { width: 46px; height: 44px; margin-left: 17px; }
.details span { margin: 5px 0 0 16px; letter-spacing: .4px; }

.taskbar { height: 28px; background: #d5d0c8; border-top: 1px solid #f4f2ee; display: flex; align-items: center; box-shadow: 0 -1px #77736d; z-index: 1; }
.start, .tb { height: 22px; border: 1px solid; border-color: #fff #404040 #404040 #fff; box-shadow: inset -1px -1px #858079; display: flex; align-items: center; }
.start { width: 52px; margin-left: 2px; }
.start svg { width: 17px; height: 17px; }
.start b { font-size: 12px; letter-spacing: -.3px; }
.tb { justify-content: center; }
.tb svg { width: 17px; height: 17px; }
.ie { width: 32px; margin-left: 9px; padding-right: 3px; box-shadow: inset -1px -1px #858079, inset -5px 0 #d5d0c8, inset -6px 0 #404040; }
.act { width: 32px; margin-left: 2px; background: #fff; border-color: #404040 #fff #fff #404040; box-shadow: none; }
.quick { margin-left: 10px; }
.quick svg, .opera svg { width: 16px; height: 16px; }
.chrome { width: 32px; margin-left: 10px; }
.opera { margin-left: 10px; }
.tray { margin-left: auto; margin-right: 2px; width: 172px; height: 22px; border: 1px solid; border-color: #858079 #fff #fff #858079; display: flex; align-items: center; }
.tray svg { width: 90px; height: 18px; }
.tray span { margin-left: 12px; white-space: nowrap; }
.tray .td { width: 16px; height: 16px; margin-left: auto; margin-right: 1px; }
.mark { position: absolute; z-index: 3; left: 1036px; top: 605px; width: 200px; height: 70px; }
```
